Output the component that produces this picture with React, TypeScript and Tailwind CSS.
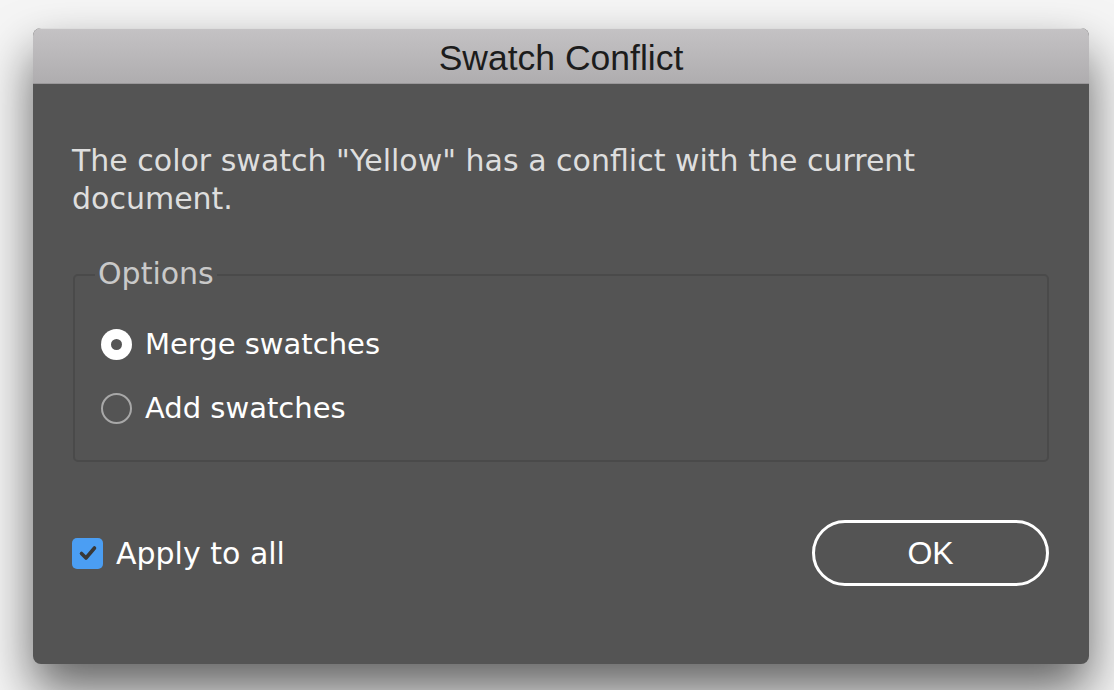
import React from "react";

export default function App() {
  return (
    <div className="w-[1114px] h-[690px] overflow-hidden bg-[#f5f5f5] pt-[28px] pl-[33px]" style={{ fontFamily: '"DejaVu Sans", sans-serif' }}>
      <div className="w-[1056px] h-[636px] rounded-[8px] bg-[#545454] flex flex-col overflow-hidden shadow-[0_26px_50px_rgba(0,0,0,0.6)]">
        <div className="h-[56px] shrink-0 flex items-center justify-center bg-gradient-to-b from-[#c4c2c4] to-[#afadaf] border-t border-[#dcdcdc] border-b border-b-[#9a989a]">
          <span className="text-[35.5px] text-[#1c1c1c] leading-none pt-[5px]" style={{ fontFamily: '"Liberation Sans", sans-serif' }}>Swatch Conflict</span>
        </div>
        <div className="flex flex-col pl-[39px] pr-[40px] pt-[58px]">
          <p className="text-[30px] leading-[38px] text-[#dedede] pr-[60px]">
            The color swatch "Yellow" has a conflict with the current document.
          </p>
          <div className="relative mt-[56px] ml-[1px] h-[188px] border-2 border-[#4a4a4a] rounded-[5px]">
            <span className="absolute left-[20px] -top-[20px] px-[3px] bg-[#545454] text-[30px] leading-[36px] text-[#c9c9c9]">Options</span>
            <div className="flex flex-col pl-[26px] pt-[53px] gap-[33px]">
              <div className="flex items-center gap-[13px] h-[31px]">
                <div className="w-[31px] h-[31px] rounded-full bg-white flex items-center justify-center">
                  <div className="w-[11px] h-[11px] rounded-full bg-[#545454]" />
                </div>
                <span className="text-[29px] text-white">Merge swatches</span>
              </div>
              <div className="flex items-center gap-[13px] h-[31px]">
                <div className="w-[31px] h-[31px] rounded-full border-2 border-[#a8a8a8]" />
                <span className="text-[29px] text-white">Add swatches</span>
              </div>
            </div>
          </div>
          <div className="flex items-center justify-between mt-[58px]">
            <div className="flex items-center gap-[13px]">
              <div className="w-[31px] h-[31px] rounded-[5px] bg-[#4b9ef3] flex items-center justify-center">
                <svg width="20" height="20" viewBox="0 0 20 20">
                  <path d="M3.5 10.5 L8 15 L16.5 5" fill="none" stroke="#383838" strokeWidth="3.6" strokeLinecap="round" strokeLinejoin="round" />
                </svg>
              </div>
              <span className="text-[30px] text-white">Apply to all</span>
            </div>
            <button className="w-[237px] h-[66px] rounded-full border-[3px] border-white flex items-center justify-center text-white text-[32px]" style={{ fontFamily: '"Liberation Sans", sans-serif' }}>
              OK
            </button>
          </div>
        </div>
      </div>
    </div>
  );
}
